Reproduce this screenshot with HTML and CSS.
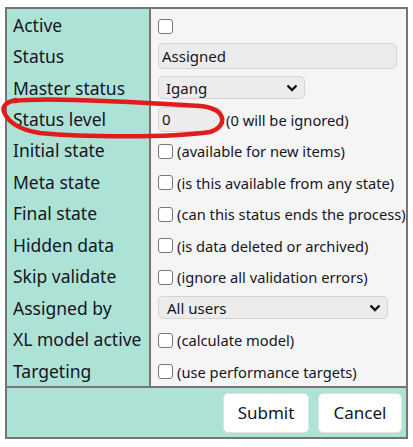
FILE: index.html
```html
<!DOCTYPE html>
<html>
<head>
	<meta charset="UTF-8">
	<title>Edit status</title>
	<link rel="stylesheet" href="styles.css">
</head>
<body>
	<form class="status-form">
		<table class="form-table">
			<tr>
				<td class="label">Active</td>
				<td class="value"><input type="checkbox" class="check"></td>
			</tr>
			<tr>
				<td class="label">Status</td>
				<td class="value"><input type="text" class="text-input wide" value="Assigned"></td>
			</tr>
			<tr>
				<td class="label">Master status</td>
				<td class="value">
					<div class="select master">
						<span>Igang</span>
						<svg width="12" height="8" viewBox="0 0 12 8"><path d="M1.5 1.5 L6 6 L10.5 1.5" fill="none" stroke="#111" stroke-width="2.4"/></svg>
					</div>
				</td>
			</tr>
			<tr>
				<td class="label">Status level</td>
				<td class="value"><input type="text" class="text-input small" value="0"><span class="hint">(0 will be ignored)</span></td>
			</tr>
			<tr>
				<td class="label">Initial state</td>
				<td class="value"><input type="checkbox" class="check"><span class="hint">(available for new items)</span></td>
			</tr>
			<tr>
				<td class="label">Meta state</td>
				<td class="value"><input type="checkbox" class="check"><span class="hint">(is this available from any state)</span></td>
			</tr>
			<tr>
				<td class="label">Final state</td>
				<td class="value"><input type="checkbox" class="check"><span class="hint">(can this status ends the process)</span></td>
			</tr>
			<tr>
				<td class="label">Hidden data</td>
				<td class="value"><input type="checkbox" class="check"><span class="hint">(is data deleted or archived)</span></td>
			</tr>
			<tr>
				<td class="label">Skip validate</td>
				<td class="value"><input type="checkbox" class="check"><span class="hint">(ignore all validation errors)</span></td>
			</tr>
			<tr>
				<td class="label">Assigned by</td>
				<td class="value">
					<div class="select users">
						<span>All users</span>
						<svg width="12" height="8" viewBox="0 0 12 8"><path d="M1.5 1.5 L6 6 L10.5 1.5" fill="none" stroke="#111" stroke-width="2.4"/></svg>
					</div>
				</td>
			</tr>
			<tr>
				<td class="label">XL model active</td>
				<td class="value"><input type="checkbox" class="check"><span class="hint">(calculate model)</span></td>
			</tr>
			<tr>
				<td class="label">Targeting</td>
				<td class="value"><input type="checkbox" class="check"><span class="hint">(use performance targets)</span></td>
			</tr>
			<tr class="footer">
				<td colspan="2">
					<div class="buttons">
						<button type="submit" class="btn submit">Submit</button>
						<button type="button" class="btn cancel">Cancel</button>
					</div>
				</td>
			</tr>
		</table>
	</form>

	<!-- hand drawn mark around "Status level" -->
	<svg class="scribble" width="413" height="447" viewBox="0 0 413 447">
		<path d="M14,101 C40,97 120,101 200,106 C226,108 229,126 210,132 C170,138 80,137 40,133 C20,130 8,122 4,112 C2,106 6,102 16,100" fill="none" stroke="#e21c1c" stroke-width="4.5" stroke-linecap="round"/>
	</svg>
</body>
</html>
```

FILE: styles.css
```css
body {
	margin: 0;
	padding: 7px 5px;
	font-family: "Noto Sans", sans-serif;
	color: #15151f;
	background: #fff;
}
.form-table {
	width: 403px;
	border-collapse: separate;
	border-spacing: 0;
	border: 2px solid #757575;
}
.form-table td {
	height: 31.45px;
	padding: 0;
	vertical-align: middle;
}
.label {
	box-sizing: border-box;
	width: 144px;
	padding-left: 6px !important;
	background: #ade3d6;
	border-right: 2px solid #757575;
	font-size: 17.5px;
	line-height: 22px;
	white-space: nowrap;
}
.value {
	padding-left: 7px !important;
	background: #f5f5f5;
	font-size: 14.7px;
	line-height: 20px;
	white-space: nowrap;
}
.check {
	appearance: none;
	box-sizing: border-box;
	width: 15px;
	height: 15px;
	margin: 0 4px 0 0;
	border: 1px solid #777;
	border-radius: 3px;
	background: #fff;
	vertical-align: middle;
}
.hint {
	vertical-align: middle;
}
.text-input {
	box-sizing: border-box;
	height: 26px;
	padding: 0 3px;
	border: 1px solid #d4d4d4;
	border-radius: 5px;
	background: #ececec;
	font-family: inherit;
	font-size: 15px;
	color: #15151f;
	vertical-align: middle;
}
.wide {
	width: 239px;
}
.small {
	width: 64px;
	height: 25px;
	margin-right: 4px;
}
.select {
	box-sizing: border-box;
	display: flex;
	align-items: center;
	justify-content: space-between;
	height: 23px;
	padding: 0 6px 0 7px;
	border: 1px solid #d4d4d4;
	border-radius: 5px;
	background: #ececec;
	font-size: 15px;
}
.master {
	width: 147px;
}
.users {
	width: 230px;
	padding-left: 8px;
}
.footer td {
	height: 49px;
	background: #ade3d6;
	border-top: 2px solid #757575;
}
.buttons {
	display: flex;
	justify-content: flex-end;
	gap: 9px;
	padding-right: 4px;
}
.btn {
	height: 40px;
	padding: 0;
	border: 1px solid #e2e2e2;
	border-radius: 5px;
	background: #fff;
	font-family: inherit;
	font-size: 17px;
	color: #15151f;
}
.submit {
	width: 86px;
}
.cancel {
	width: 84px;
}
.scribble {
	position: absolute;
	top: 0;
	left: 0;
	pointer-events: none;
}
```
